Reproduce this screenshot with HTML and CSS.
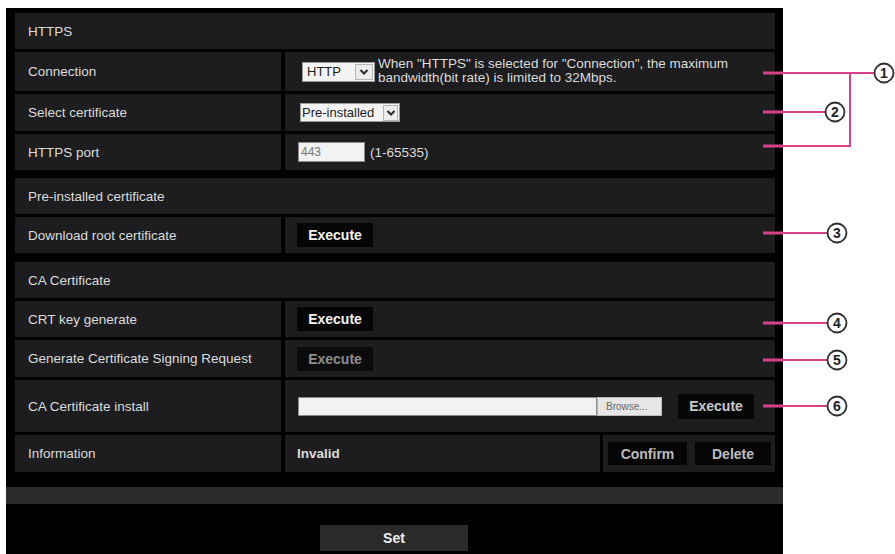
FILE: index.html
```html
<!DOCTYPE html>
<html>
<head>
<meta charset="utf-8">
<link rel="stylesheet" href="styles.css">
</head>
<body>
<div class="page">
  <div class="panel">
    <div class="content">
      <section class="sec">
        <div class="hd h36">HTTPS</div>
        <div class="row h39">
          <div class="lbl">Connection</div>
          <div class="val">
            <div class="sel sel-http"><span class="sel-text">HTTP</span><span class="sel-arrow"><svg width="12" height="10" viewBox="0 0 12 10"><path d="M2.5 3 L6 6.5 L9.5 3" fill="none" stroke="#2a2a2a" stroke-width="2"/></svg></span></div>
            <div class="note">When "HTTPS" is selected for "Connection", the maximum<br>bandwidth(bit rate) is limited to 32Mbps.</div>
          </div>
        </div>
        <div class="row h37">
          <div class="lbl">Select certificate</div>
          <div class="val">
            <div class="sel sel-cert"><span class="sel-text">Pre-installed</span><span class="sel-arrow"><svg width="12" height="10" viewBox="0 0 12 10"><path d="M2.5 3 L6 6.5 L9.5 3" fill="none" stroke="#2a2a2a" stroke-width="2"/></svg></span></div>
          </div>
        </div>
        <div class="row h36">
          <div class="lbl">HTTPS port</div>
          <div class="val">
            <div class="inp inp-port">443</div>
            <span class="range">(1-65535)</span>
          </div>
        </div>
      </section>

      <section class="sec">
        <div class="hd h36">Pre-installed certificate</div>
        <div class="row h36">
          <div class="lbl">Download root certificate</div>
          <div class="val"><button class="btn">Execute</button></div>
        </div>
      </section>

      <section class="sec sec-ca">
        <div class="hd h36">CA Certificate</div>
        <div class="row h36">
          <div class="lbl">CRT key generate</div>
          <div class="val"><button class="btn">Execute</button></div>
        </div>
        <div class="row h37">
          <div class="lbl">Generate Certificate Signing Request</div>
          <div class="val"><button class="btn btn-off">Execute</button></div>
        </div>
        <div class="row h52">
          <div class="lbl">CA Certificate install</div>
          <div class="val">
            <div class="inp inp-file"></div>
            <div class="browse">Browse...</div>
            <button class="btn btn-exec6">Execute</button>
          </div>
        </div>
        <div class="row h37">
          <div class="lbl">Information</div>
          <div class="val val-split">
            <div class="info-cell">Invalid</div>
            <div class="info-btns">
              <button class="btn btn-gray btn-confirm">Confirm</button>
              <button class="btn btn-gray">Delete</button>
            </div>
          </div>
        </div>
      </section>
    </div>
    <div class="bar"></div>
    <div class="foot"><button class="set">Set</button></div>
  </div>

  <svg class="notes" width="895" height="554" viewBox="0 0 895 554">
    <g stroke="#d9428a" fill="none">
      <path d="M763 73 H783" stroke-width="3"/>
      <path d="M783 73 H874" stroke-width="2"/>
      <path d="M850 73 V147" stroke-width="2"/>
      <path d="M763 146 H783" stroke-width="3"/>
      <path d="M783 146 H851" stroke-width="2"/>
      <path d="M763 112 H783" stroke-width="3"/>
      <path d="M783 112 H825" stroke-width="2"/>
      <path d="M763 233 H783" stroke-width="3"/>
      <path d="M783 233 H827" stroke-width="2"/>
      <path d="M763 323 H783" stroke-width="3"/>
      <path d="M783 323 H827" stroke-width="2"/>
      <path d="M763 360 H783" stroke-width="3"/>
      <path d="M783 360 H827" stroke-width="2"/>
      <path d="M763 406 H783" stroke-width="3"/>
      <path d="M783 406 H827" stroke-width="2"/>
    </g>
    <g stroke="#2e2e2e" stroke-width="1.8" fill="#fff">
      <circle cx="884" cy="73" r="9.5"/>
      <circle cx="835" cy="112" r="9.5"/>
      <circle cx="837" cy="233" r="9.5"/>
      <circle cx="837" cy="323" r="9.5"/>
      <circle cx="837" cy="360" r="9.5"/>
      <circle cx="837" cy="406" r="9.5"/>
    </g>
    <g class="num" text-anchor="middle" fill="#222">
      <text x="884" y="78">1</text>
      <text x="835" y="117">2</text>
      <text x="837" y="238">3</text>
      <text x="837" y="328">4</text>
      <text x="837" y="365">5</text>
      <text x="837" y="411">6</text>
    </g>
  </svg>
</div>
</body>
</html>
```

FILE: styles.css
```css
* { box-sizing: border-box; }

html, body {
  margin: 0;
  padding: 0;
  background: #ffffff;
}

body {
  font-family: "Liberation Sans", Arial, sans-serif;
  font-size: 13.5px;
  color: #dcdcdc;
}

.page {
  position: relative;
  width: 895px;
  height: 554px;
  overflow: hidden;
}

.panel {
  margin: 8px 0 0 6px;
  width: 777px;
  height: 546px;
  background: #000;
  display: flex;
  flex-direction: column;
}

.content {
  padding: 5px 8px 0 9px;
  display: flex;
  flex-direction: column;
  gap: 8px;
}

.sec {
  display: flex;
  flex-direction: column;
  gap: 3px;
}

.sec-ca { margin-top: 1px; }

.hd {
  background: #1d1d20;
  display: flex;
  align-items: center;
  padding-left: 13px;
}

.row {
  display: grid;
  grid-template-columns: 266px 1fr;
  column-gap: 4px;
}

.h36 { height: 36px; }
.h37 { height: 37px; }
.h39 { height: 39px; }
.h52 { height: 52px; }

.lbl, .val {
  background: #1d1d20;
  display: flex;
  align-items: center;
}

.lbl { padding-left: 13px; }

.val { padding-left: 12px; }

.sel {
  display: flex;
  align-items: center;
  height: 20px;
  background: #f3f3f3;
  border: 1px solid #9a9a9a;
  color: #1e1e1e;
  font-size: 13px;
}

.sel-http { width: 73px; margin-left: 5px; }
.sel-cert { width: 100px; margin-left: 3px; height: 19px; }

.sel-text {
  flex: 1;
  padding-left: 4px;
  white-space: nowrap;
}

.sel-cert .sel-text { padding-left: 1px; }

.sel-arrow {
  width: 18px;
  height: 16px;
  margin-right: 1px;
  border: 1px solid #b5b5b5;
  background: #ececec;
  display: flex;
  align-items: center;
  justify-content: center;
}

.sel-cert .sel-arrow { width: 15px; }

.note {
  margin-left: 3px;
  line-height: 14px;
  white-space: nowrap;
  margin-top: -2px;
}

.inp {
  height: 20px;
  background: #f2f2f2;
  border: 1px solid #8a8a8a;
  color: #777;
  font-size: 12px;
  display: flex;
  align-items: center;
  padding-left: 2px;
  margin-left: 1px;
}

.inp-port { width: 67px; }

.range { margin-left: 5px; }

.inp-file {
  width: 299px;
  height: 19px;
}

.browse {
  width: 65px;
  height: 19px;
  background: #e6e6e6;
  border: 1px solid #b8b8b8;
  color: #666;
  font-size: 10px;
  display: flex;
  align-items: center;
  padding-left: 8px;
}

.btn {
  width: 76px;
  height: 24px;
  background: #060606;
  border: none;
  color: #f2f2f2;
  font-family: "Liberation Sans", Arial, sans-serif;
  font-weight: bold;
  font-size: 14px;
  padding: 0;
}

.btn-off { color: #8d8d8d; background: #0b0b0c; }

.btn-exec6 {
  margin-left: 16px;
  height: 25px;
  color: #c9c9c9;
}

.val-split {
  padding-left: 0;
  background: #000;
  display: flex;
  gap: 3px;
  align-items: stretch;
}

.info-cell {
  width: 315px;
  background: #1d1d20;
  display: flex;
  align-items: center;
  padding-left: 12px;
  font-weight: bold;
}

.info-btns {
  flex: 1;
  background: #1d1d20;
  display: flex;
  align-items: center;
  padding-left: 5px;
  gap: 8px;
}

.btn-gray {
  height: 23px;
  color: #bdbdbd;
}

.btn-confirm { width: 79px; }

.bar {
  margin-top: 15px;
  height: 17px;
  background: #2b2b2b;
}

.foot {
  padding-top: 21px;
  display: flex;
  justify-content: center;
}

.set {
  width: 148px;
  height: 26px;
  background: #2a2a2a;
  border: none;
  color: #f0f0f0;
  font-family: "Liberation Sans", Arial, sans-serif;
  font-weight: bold;
  font-size: 14px;
  margin-left: -1px;
}

.notes {
  position: absolute;
  left: 0;
  top: 0;
  pointer-events: none;
}

.num {
  font-family: "Liberation Sans", Arial, sans-serif;
  font-weight: bold;
  font-size: 14px;
}
```
